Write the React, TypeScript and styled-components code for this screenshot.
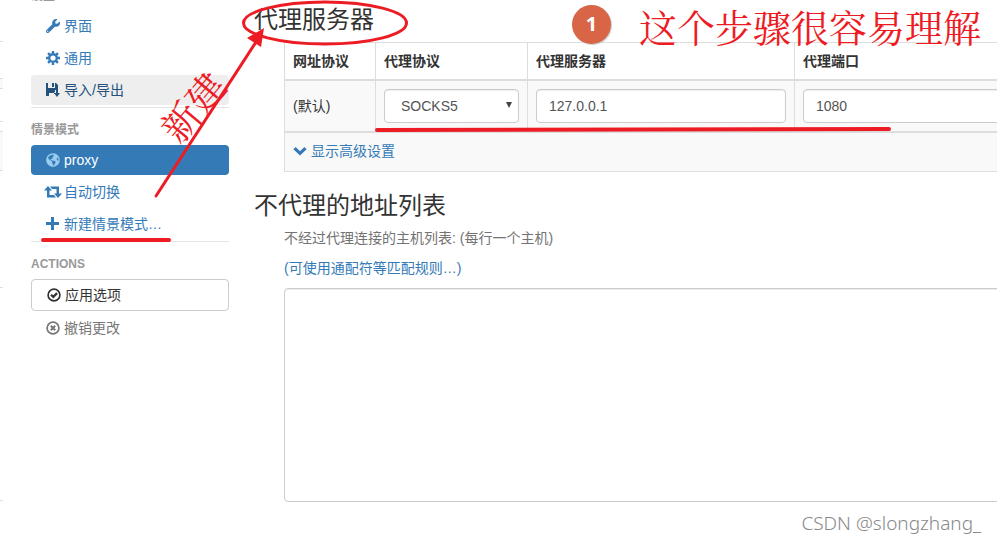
import React from "react";
import styled, { createGlobalStyle } from "styled-components";
import { FaWrench, FaGlobeAmericas } from "react-icons/fa";

const Global = createGlobalStyle`
  * { box-sizing: border-box; }
  html, body, #root { height: 100%; }
  body {
    margin: 0;
    overflow: hidden;
    background: #fff;
    color: #333;
    font: 14px/20px "Liberation Sans", "Noto Sans CJK SC", sans-serif;
  }
  button, input, select, textarea { font: inherit; }
`;

const red = "#ed1c24";
const blue = "#337ab7";

const Page = styled.div`
  position: relative;
  display: flex;
  height: 100%;
  min-height: 100vh;
  overflow: hidden;
`;

const Edge = styled.div`
  flex: none;
  width: 3px;
  padding-top: 41px;
`;

const EdgeBlock = styled.div<{ $height: number; $shade?: boolean }>`
  height: ${(p) => p.$height}px;
  border-top: 1px solid #ddd;
  background: ${(p) => (p.$shade ? "#f9f9f9" : "transparent")};
`;

const Sidebar = styled.nav`
  flex: none;
  width: 198px;
  margin-left: 28px;
  display: flex;
  flex-direction: column;
`;

const SideTitle = styled.h6<{ $cut?: boolean }>`
  margin: ${(p) => (p.$cut ? "-14px 0 5px" : "0")};
  padding: ${(p) => (p.$cut ? "0" : "12px 0 5px")};
  font-size: 12px;
  line-height: 20px;
  font-weight: 700;
  color: #999;
`;

const List = styled.ul`
  list-style: none;
  margin: 0;
  padding: 0 0 2px;
  display: flex;
  flex-direction: column;
  gap: 2px;
  border-bottom: 1px solid #e5e5e5;
`;

const Actions = styled.div`
  display: flex;
  flex-direction: column;
  gap: 2px;
`;

type Tone = "link" | "hover" | "active" | "outline" | "muted";
const tones: Record<Tone, string> = {
  link: `color: ${blue}; background: transparent;`,
  hover: "color: #23527c; background: #eee;",
  active: `color: #fff; background: ${blue};`,
  outline: "color: #333; background: #fff; border: 1px solid #ccc; height: 32px;",
  muted: "color: #777; background: transparent;",
};

const itemStyle = `
  display: flex;
  align-items: center;
  gap: 4px;
  width: 100%;
  height: 30px;
  padding: 0 15px;
  border: 0;
  border-radius: 4px;
  text-decoration: none;
  text-align: left;
  cursor: pointer;
  svg { flex: none; width: 14px; height: 14px; overflow: visible; }
`;

const NavLink = styled.a<{ $tone: Tone }>`
  ${itemStyle}
  ${(p) => tones[p.$tone]}
`;

const ActionButton = styled.button<{ $tone: Tone }>`
  ${itemStyle}
  ${(p) => tones[p.$tone]}
`;

const Main = styled.main`
  flex: 1;
  min-width: 0;
  margin-left: 25px;
`;

const Heading = styled.h3`
  margin: 0;
  font-size: 24px;
  line-height: 28px;
  font-weight: 400;
  color: #333;
`;

const Section = styled.section<{ $top: number }>`
  padding-top: ${(p) => p.$top}px;
`;

const Indent = styled.div`
  margin-left: 30px;
`;

const Table = styled.table`
  width: calc(100% + 40px);
  margin-top: 8px;
  table-layout: fixed;
  border-collapse: collapse;
  border: 1px solid #ddd;
  th, td { border: 1px solid #ddd; padding: 8px; text-align: left; }
  th { height: 37px; padding: 8px 8px 7px; border-bottom-width: 2px; font-weight: 700; }
  td { background: #f9f9f9; }
  tbody td { height: 52px; }
  tfoot td { height: 39px; border-top-width: 2px; }
`;

const Col = styled.col<{ $w?: number }>`
  width: ${(p) => (p.$w ? `${p.$w}px` : "auto")};
`;

const fieldStyle = `
  display: block;
  width: 100%;
  height: 34px;
  border: 1px solid #ccc;
  border-radius: 4px;
  background: #fff;
  color: #555;
  box-shadow: inset 0 1px 1px rgba(0, 0, 0, 0.075);
`;

const Field = styled.input`
  ${fieldStyle}
  padding: 6px 12px;
`;

const SelectBox = styled.div`
  position: relative;
  svg {
    position: absolute;
    right: 7px;
    top: 13px;
    width: 6px;
    height: 6px;
    pointer-events: none;
  }
`;

const Select = styled.select`
  ${fieldStyle}
  appearance: none;
  padding: 6px 16px;
`;

const TextLink = styled.a`
  display: inline-flex;
  align-items: center;
  gap: 4px;
  color: ${blue};
  text-decoration: none;
  svg { width: 14px; height: 14px; }
`;

const Help = styled.label`
  display: block;
  margin: 8px 0 10px;
  color: #737373;
`;

const Area = styled.textarea`
  ${fieldStyle}
  width: calc(100% + 40px);
  height: 214px;
  margin-top: 10px;
  padding: 6px 12px;
  resize: none;
`;

const Marks = styled.svg`
  position: absolute;
  left: 0;
  top: 0;
  width: 997px;
  height: 544px;
  pointer-events: none;
`;

const Note = styled.div`
  position: absolute;
  top: 0;
  left: 639px;
  font-size: 38px;
  line-height: 52px;
  white-space: nowrap;
  color: ${red};
  font-family: "Noto Serif CJK SC", "Noto Sans CJK SC", serif;
  font-weight: 400;
`;

const TiltedNote = styled(Note)`
  left: 154px;
  top: 80px;
  transform: rotate(-50deg);
`;

const Badge = styled.div`
  position: absolute;
  left: 572px;
  top: 5px;
  width: 39px;
  height: 39px;
  border-radius: 50%;
  background: #d96547;
  box-shadow: 1px 1px 1px #ccc;
  color: #fff;
  font: 700 20px/38px "Open Sans", sans-serif;
  text-align: center;
`;

const Watermark = styled.div`
  position: absolute;
  right: 16px;
  bottom: 8px;
  color: #888;
  font: 300 19px/26px "Noto Sans", sans-serif;
`;

const CogIcon = () => (
  <svg viewBox="0 0 14 14" fill="none" stroke="currentColor" aria-hidden="true">
    <circle cx="7" cy="7" r="3.8" strokeWidth="2.4" />
    <path
      d="M7 0v2.500M7 11.500V14M0 7h2.500M11.500 7H14M2.050 2.050l1.800 1.800M10.150 10.150l1.800 1.800M2.050 11.950l1.800-1.800M10.150 3.850l1.800-1.800"
      strokeWidth="2.4"
    />
  </svg>
);

const ExportIcon = () => (
  <svg viewBox="0 0 14 14" fill="currentColor" aria-hidden="true">
    <path d="M0 0h2v5h7V0h1l2 2v5H9v2H8l1 2H8v-1H3v3H0z" />
    <path d="M6 0h2v4H6z" />
    <path d="M10 7h2v3h2l-3 4-3-4h2z" />
  </svg>
);

const SwitchIcon = () => (
  <svg viewBox="0 0 14 14" fill="currentColor" aria-hidden="true">
    <path d="M2 1l4 4.500H3.500V10H8l2 2.500H1V5.500h-3z" />
    <path d="M12 13l-4-4.500h2.500V4H6L4 1.500h9v7h3z" />
  </svg>
);

const PlusIcon = () => (
  <svg viewBox="0 0 14 14" fill="currentColor" aria-hidden="true">
    <path d="M5 0h3v5h5v3H8v5H5V8H0V5h5z" />
  </svg>
);

const CheckIcon = () => (
  <svg viewBox="0 0 14 14" fill="none" stroke="currentColor" aria-hidden="true">
    <circle cx="7" cy="7" r="5.9" strokeWidth="1.7" />
    <path d="M4 6.7l2.3 2.2 3.8-3.8" strokeWidth="2.2" />
  </svg>
);

const CancelIcon = () => (
  <svg viewBox="0 0 14 14" fill="none" stroke="currentColor" aria-hidden="true">
    <circle cx="7" cy="7" r="5.9" strokeWidth="1.7" />
    <path d="M4.8 4.8l4.4 4.4M9.2 4.8L4.8 9.2" strokeWidth="2" />
  </svg>
);

const ChevronIcon = () => (
  <svg viewBox="0 0 14 14" fill="none" stroke="currentColor" aria-hidden="true">
    <path d="M1.5 4.2L7 9.4l5.5-5.2" strokeWidth="3.2" />
  </svg>
);

export default function App() {
  return (
    <>
      <Global />
      <Page>
        <Edge aria-hidden="true">
          <EdgeBlock $height={37} />
          <EdgeBlock $height={10} $shade />
          <EdgeBlock $height={33} />
          <EdgeBlock $height={10} />
          <EdgeBlock $height={39} $shade />
          <EdgeBlock $height={117} />
          <EdgeBlock $height={213} />
          <EdgeBlock $height={1} />
        </Edge>
        <Sidebar>
          <SideTitle $cut>设置</SideTitle>
          <List>
            <li><NavLink href="#ui" $tone="link"><FaWrench />界面</NavLink></li>
            <li><NavLink href="#general" $tone="link"><CogIcon />通用</NavLink></li>
            <li><NavLink href="#io" $tone="hover"><ExportIcon />导入/导出</NavLink></li>
          </List>
          <SideTitle>情景模式</SideTitle>
          <List>
            <li><NavLink href="#proxy" $tone="active"><FaGlobeAmericas color="#99ccee" />proxy</NavLink></li>
            <li><NavLink href="#auto" $tone="link"><SwitchIcon />自动切换</NavLink></li>
            <li><NavLink href="#new" $tone="link"><PlusIcon />新建情景模式…</NavLink></li>
          </List>
          <SideTitle>ACTIONS</SideTitle>
          <Actions>
            <ActionButton type="button" $tone="outline"><CheckIcon />应用选项</ActionButton>
            <ActionButton type="button" $tone="muted"><CancelIcon />撤销更改</ActionButton>
          </Actions>
        </Sidebar>
        <Main>
          <Section $top={6}>
            <Heading>代理服务器</Heading>
            <Indent>
              <Table>
                <colgroup><Col $w={91} /><Col $w={152} /><Col $w={267} /><Col /></colgroup>
                <thead>
                  <tr><th>网址协议</th><th>代理协议</th><th>代理服务器</th><th>代理端口</th></tr>
                </thead>
                <tbody>
                  <tr>
                    <td>(默认)</td>
                    <td>
                      <SelectBox>
                        <Select aria-label="代理协议" defaultValue="SOCKS5"><option>SOCKS5</option></Select>
                        <svg viewBox="0 0 6 6" aria-hidden="true"><path d="M0 0h6L3 6z" fill="#444" /></svg>
                      </SelectBox>
                    </td>
                    <td><Field aria-label="代理服务器" defaultValue="127.0.0.1" /></td>
                    <td><Field aria-label="代理端口" defaultValue="1080" /></td>
                  </tr>
                </tbody>
                <tfoot>
                  <tr><td colSpan={4}><TextLink href="#advanced"><ChevronIcon />显示高级设置</TextLink></td></tr>
                </tfoot>
              </Table>
            </Indent>
          </Section>
          <Section $top={20}>
            <Heading>不代理的地址列表</Heading>
            <Indent>
              <Help htmlFor="bypass">不经过代理连接的主机列表: (每行一个主机)</Help>
              <TextLink href="#rules">(可使用通配符等匹配规则…)</TextLink>
              <Area id="bypass" />
            </Indent>
          </Section>
        </Main>
        <Marks viewBox="0 0 997 544" fill="none" stroke={red} strokeLinecap="round" aria-hidden="true">
          <ellipse cx="325" cy="23" rx="81.500" ry="21" strokeWidth="3" />
          <path d="M156 196L258 39" strokeWidth="3" />
          <path d="M264 28L247 38L261 47Z" fill={red} stroke="none" />
          <path d="M377 130L889 129" strokeWidth="4" />
          <path d="M43 240H169" strokeWidth="4" />
        </Marks>
        <TiltedNote>新建</TiltedNote>
        <Badge>1</Badge>
        <Note>这个步骤很容易理解</Note>
        <Watermark>CSDN @slongzhang_</Watermark>
      </Page>
    </>
  );
}
